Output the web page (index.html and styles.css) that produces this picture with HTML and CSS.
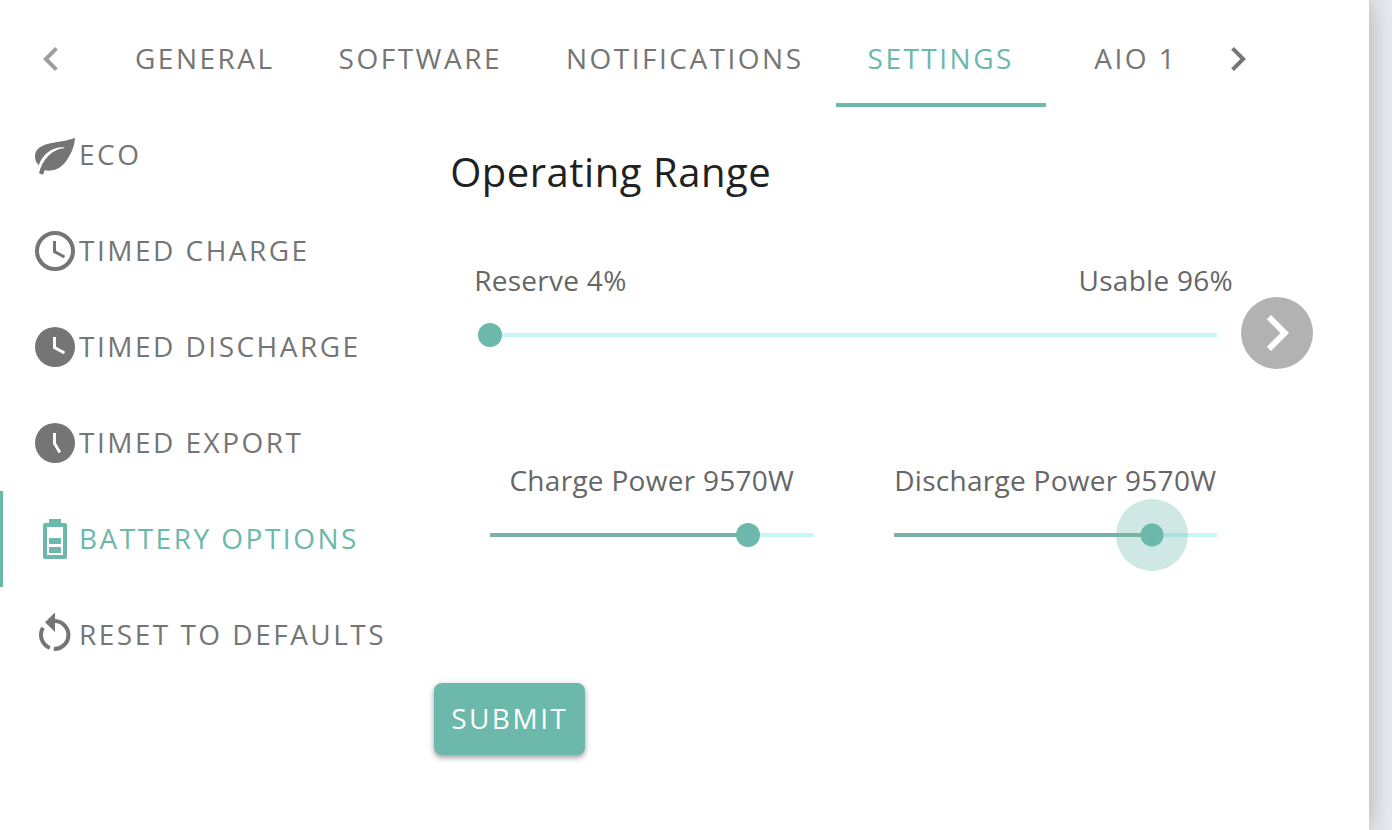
FILE: index.html
```
<!DOCTYPE html>
<html lang="en">
<head>
  <meta charset="UTF-8">
  <title>Settings - Battery Options</title>
  <link rel="stylesheet" href="styles.css">
</head>
<body>

<div class="panel">
  <nav class="tabs">
    <button class="tab-scroll" aria-label="Previous tabs" disabled>
      <svg class="icon" viewBox="0 0 24 24"><path d="M15.41 16.59L10.83 12l4.58-4.59L14 6l-6 6 6 6z"/></svg>
    </button>
    <div class="tab-list">
      <button class="tab">General</button>
      <button class="tab">Software</button>
      <button class="tab">Notifications</button>
      <button class="tab active">Settings</button>
      <button class="tab">AIO 1</button>
    </div>
    <button class="tab-scroll next" aria-label="Next tabs">
      <svg class="icon" viewBox="0 0 24 24"><path d="M8.59 16.59L13.17 12 8.59 7.41 10 6l6 6-6 6z"/></svg>
    </button>
  </nav>

  <div class="body">
    <nav class="side-menu">
      <button class="side-item">
        <svg class="icon" viewBox="0 0 144 144"><path d="M132 20C95 38 12 28 12 76Q12 92 23 103C34 72 62 47 98 49C101 50 101 51 98 52C62 56 35 84 24 127L36 131L41 118C75 124 98 105 111 82C124 60 130 45 132 20z"/></svg>
        <span>Eco</span>
      </button>
      <button class="side-item">
        <svg class="icon" viewBox="0 0 24 24">
          <circle class="line" cx="12" cy="12" r="9" stroke-width="2"/>
          <path class="line" d="M11.75 7v5.3l5 2.7" stroke-width="1.5"/>
        </svg>
        <span>Timed Charge</span>
      </button>
      <button class="side-item">
        <svg class="icon" viewBox="0 0 24 24">
          <circle cx="12" cy="12" r="10"/>
          <path class="hand" d="M11.75 7v5.3l5 2.7"/>
        </svg>
        <span>Timed Discharge</span>
      </button>
      <button class="side-item">
        <svg class="icon" viewBox="0 0 24 24">
          <circle cx="12" cy="12" r="10"/>
          <path class="hand" d="M11.75 7v5.2l2.7 4.5"/>
        </svg>
        <span>Timed Export</span>
      </button>
      <button class="side-item active">
        <svg class="icon" viewBox="0 0 24 24"><path fill-rule="evenodd" d="M9 2h6v2h2a1 1 0 0 1 1 1v16a1 1 0 0 1-1 1H7a1 1 0 0 1-1-1V5a1 1 0 0 1 1-1h2zM8 6v14h8V6zM9 11.5h6v3H9zM9 16h6v3H9z"/></svg>
        <span>Battery Options</span>
      </button>
      <button class="side-item">
        <svg class="icon" viewBox="0 0 24 24">
          <path d="M12 .8v9.7L7 5.6z"/>
          <path class="line" d="M12 5a7 7 0 0 1-.6 14M6 8.4a7 7 0 0 0 3.4 10.1" stroke-width="2"/>
        </svg>
        <span>Reset to defaults</span>
      </button>
    </nav>

    <form class="content">
      <h1>Operating Range</h1>

      <div class="range-row">
        <div class="slider">
          <div class="range-labels">
            <label for="reserve">Reserve 4%</label>
            <span>Usable 96%</span>
          </div>
          <input type="range" id="reserve" min="4" max="100" value="4" style="--fill: 0">
        </div>
        <button type="button" class="round-button" aria-label="Next">
          <svg viewBox="0 0 24 24"><path d="M10 6L8.59 7.41 13.17 12l-4.58 4.59L10 18l6-6z"/></svg>
        </button>
      </div>

      <div class="power-row">
        <div class="slider">
          <label for="charge">Charge Power 9570W</label>
          <input type="range" id="charge" min="0" max="12000" step="10" value="9570" style="--fill: 0.7975">
        </div>
        <div class="slider">
          <label for="discharge">Discharge Power 9570W</label>
          <input type="range" class="focused" id="discharge" min="0" max="12000" step="10" value="9570" style="--fill: 0.7975">
        </div>
      </div>

      <button type="button" class="submit">Submit</button>
    </form>
  </div>
</div>

<script>
  // Keep the filled part of each track and its label in step with the thumb
  document.querySelectorAll('input[type="range"]').forEach(function(slider) {
    const label = document.querySelector(`label[for="${slider.id}"]`);

    slider.addEventListener('input', function() {
      slider.style.setProperty('--fill', (slider.value - slider.min) / (slider.max - slider.min));

      if (slider.id === 'reserve') {
        label.textContent = `Reserve ${slider.value}%`;
        label.nextElementSibling.textContent = `Usable ${100 - slider.value}%`;
      } else {
        label.textContent = label.textContent.replace(/\d+W/, `${slider.value}W`);
      }
    });
  });
</script>

</body>
</html>
```
FILE: styles.css
```
:root {
  --primary: #6cb8aa;
  --track-fill: #7ab2a9;
  --track: #c4f7f5;
  --grey: #757575;
}

* {
  box-sizing: border-box;
}

body {
  margin: 0;
  background-color: #e8eaef;
  font-family: 'Open Sans', 'Noto Sans', sans-serif;
  font-size: 28px;
  line-height: 38px;
  letter-spacing: 0.01em;
  color: #666;
  overflow-x: hidden;
}

.panel {
  min-height: 100vh;
  margin-right: 23px;
  padding-top: 11px;
  background-color: white;
  box-shadow: 0 0 24px rgba(0, 0, 0, 0.28);
}

button {
  font: inherit;
  letter-spacing: 0.089em;
  text-transform: uppercase;
  color: var(--grey);
  background: none;
  border: none;
  padding: 0;
  cursor: pointer;
}

.icon {
  flex: none;
  width: 48px;
  height: 48px;
  fill: currentColor;
}

.icon .line {
  fill: none;
  stroke: currentColor;
}

.icon .hand {
  fill: none;
  stroke: white;
  stroke-width: 1.5;
}

/* Top tabs */
.tabs {
  display: flex;
  height: 96px;
  padding-left: 27px;
}

.tab-list {
  display: flex;
  margin-left: 28px;
}

.tab {
  min-width: 180px;
  padding: 2px 32px 0;
  border-bottom: 4px solid transparent;
  white-space: nowrap;
}

.tab.active {
  color: var(--primary);
  border-bottom-color: var(--primary);
}

.tab-scroll {
  display: flex;
  align-items: center;
}

.tab-scroll:disabled {
  color: #9e9e9e;
  cursor: default;
}

.tab-scroll.next {
  margin-left: -12px;
}

/* Side menu */
.body {
  display: flex;
}

.side-menu {
  display: flex;
  flex-direction: column;
  flex: none;
}

.side-item {
  display: flex;
  align-items: center;
  height: 96px;
  padding: 0 32px 0 28px;
  border-left: 3px solid transparent;
}

.side-item span {
  padding-bottom: 2px;
}

.side-item.active {
  color: var(--primary);
  border-left-color: var(--primary);
}

/* Battery options */
.content {
  flex: 1;
  padding: 34px 56px 32px 16px;
}

h1 {
  margin: 0 0 58px 16px;
  font-size: 40px;
  font-weight: 400;
  line-height: 62px;
  letter-spacing: 0.013em;
  color: #212121;
}

.range-row {
  display: flex;
  margin-left: 56px;
}

.slider {
  flex: 1;
  text-align: center;
}

.slider label {
  white-space: nowrap;
}

.range-labels {
  display: flex;
  justify-content: space-between;
  margin: 0 -16px;
}

.round-button {
  flex: none;
  width: 72px;
  height: 72px;
  margin: 36px 0 0 24px;
  border-radius: 50%;
  background-color: #b2b2b2;
}

.round-button svg {
  display: block;
  fill: white;
}

.power-row {
  display: flex;
  gap: 80px;
  margin: 92px 96px 0 56px;
}

/* The box is one thumb wider than the track, so the thumb centres on its ends */
input[type="range"] {
  --thumb: 24px;
  appearance: none;
  -webkit-appearance: none;
  display: block;
  width: calc(100% + var(--thumb));
  height: 24px;
  margin: 24px calc(var(--thumb) / -2) 0;
  background: none;
  cursor: pointer;
  outline: none;
}

input[type="range"]::-webkit-slider-runnable-track {
  height: 4px;
  background:
    linear-gradient(var(--track-fill), var(--track-fill)) calc(var(--thumb) / 2) 0 / calc((100% - var(--thumb)) * var(--fill)) 4px no-repeat,
    linear-gradient(var(--track), var(--track)) calc(var(--thumb) / 2) 0 / calc(100% - var(--thumb)) 4px no-repeat;
}

input[type="range"]::-webkit-slider-thumb {
  -webkit-appearance: none;
  width: var(--thumb);
  height: var(--thumb);
  margin-top: calc(2px - var(--thumb) / 2);
  border-radius: 50%;
  background-color: var(--primary);
}

/* The focused thumb carries its halo inside a larger circle */
input[type="range"].focused {
  --thumb: 72px;
}

input[type="range"].focused::-webkit-slider-thumb {
  background: radial-gradient(circle, var(--primary) 11px, rgba(108, 184, 170, 0.32) 12px);
}

.submit {
  height: 72px;
  margin-top: 136px;
  padding: 0 17px 2px;
  border-radius: 8px;
  color: white;
  background-color: var(--primary);
  box-shadow: 0 3px 5px rgba(0, 0, 0, 0.3), 0 1px 8px rgba(0, 0, 0, 0.1);
}
```
